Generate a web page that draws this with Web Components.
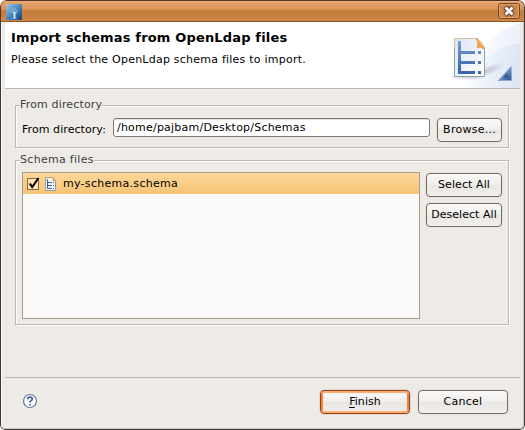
<!DOCTYPE html>
<html lang="en"><head><meta charset="utf-8"><title>Import schemas</title>
<style>
html,body{margin:0;width:525px;height:430px;overflow:hidden;background:#fff}
body{font:11px/14px "DejaVu Sans",sans-serif;color:#000}
</style></head><body>
<wizard-dialog>
  <window-titlebar slot="title"></window-titlebar>
  <wizard-header slot="header"><span slot="title">Import schemas from OpenLdap files</span><span slot="text">Please select the OpenLdap schema files to import.</span></wizard-header>
  <group-box label="From directory" style="--h:43px;--ls:.16px">
    <directory-field value="/home/pajbam/Desktop/Schemas"></directory-field>
  </group-box>
  <group-box label="Schema files" style="--h:165px;--ls:.3px">
    <schema-picker><schema-row>my-schema.schema</schema-row></schema-picker>
  </group-box>
  <wizard-footer slot="footer"></wizard-footer>
</wizard-dialog>
<script>
function define(name, markup, setup) {
  customElements.define(name, class extends HTMLElement {
    constructor() {
      super();
      this.attachShadow({mode: 'open'}).innerHTML = markup;
    }
    connectedCallback() { if (setup) setup(this, this.shadowRoot); }
  });
}

define('push-button', `<style>
:host{display:flex;box-sizing:border-box;width:var(--w,76px);height:24px;border:1px solid #756d62;border-radius:4px;
background:linear-gradient(#faf9f8,#f0eeeb 50%,#e9e6e2 52%,#f1efec);box-shadow:0 0 0 1px #e6e2dc;
align-items:center;justify-content:center;white-space:nowrap;letter-spacing:var(--bls,.25px)}
:host([primary]){border-color:#963f13;box-shadow:0 0 0 1px #e3dad2,inset 0 2px #ffae74,inset 0 -2px #ffad72,inset 2px 0 #f5823c,inset -2px 0 #f5823c}
span{line-height:14px;padding-bottom:1px}
</style><span><slot></slot></span>`);

define('window-titlebar', `<style>
:host{display:flex;box-sizing:border-box;height:22px;padding:0 4px 0 5px;border:1px solid #4d3527;border-bottom:1px solid #89542a;border-radius:6px 6px 0 0;
justify-content:space-between;background:linear-gradient(#edb98a 0,#e4a369 1px,#db955a 8px,#c67c38 10px,#c98140 15px,#d08848 20px)}
.app{margin-top:3px}
.close{margin-top:2px}
svg{display:block}
</style>
<svg class="app" width="16" height="16"><defs><linearGradient id="a" x1="0" y1="0" x2="1" y2="1"><stop stop-color="#a6c9e6"/><stop offset=".5" stop-color="#4c86bd"/><stop offset="1" stop-color="#123d77"/></linearGradient></defs><rect width="16" height="16" rx="1" fill="url(#a)"/><path d="M5 4h5l2 3-2 3H6L4 7z" fill="#77aad5" opacity=".65"/><path d="M8.500 8v7" stroke="#d9efff" stroke-width="1.800"/><path d="M6.500 7.500l2 2 2-2" fill="none" stroke="#b6d8f2"/><path d="M5 14.500h6" stroke="#8dbce2" opacity=".6"/></svg>
<svg class="close" width="22" height="16"><rect x=".5" y=".5" width="21" height="15" rx="2" fill="#cc8749" stroke="#6f4727"/><rect x="1.500" y="1.500" width="19" height="13" rx="1" fill="none" stroke="#e1a36c"/><path d="M7 4l8 8m0-8l-8 8" stroke="#60432d" stroke-width="4.800"/><path d="M7.500 4.500l7 7m0-7l-7 7" stroke="#fff" stroke-width="2.700"/></svg>`);

define('wizard-header', `<style>
:host{display:flex;box-sizing:border-box;height:67px;background:#fff;border-bottom:1px solid #bcb8b3;justify-content:space-between}
.copy{padding:8px 0 0 6px;white-space:nowrap}
.title{font-size:13px;font-weight:bold;line-height:16px;letter-spacing:.165px}
.text{margin-top:7px;line-height:14px;letter-spacing:.23px}
svg{display:block}
</style>
<div class="copy"><div class="title"><slot name="title"></slot></div><div class="text"><slot name="text"></slot></div></div>
<svg width="75" height="66" viewBox="445 22 75 66">
<defs><linearGradient id="s" x1="0" x2="1" y2=".1"><stop stop-color="#fff"/><stop offset=".35" stop-color="#fafbfe"/><stop offset="1" stop-color="#ebf0fa"/></linearGradient>
<linearGradient id="t" x1="0" x2="1" y2=".1"><stop stop-color="#fff"/><stop offset=".35" stop-color="#f2f5fc"/><stop offset="1" stop-color="#dde5f6"/></linearGradient>
<linearGradient id="p" x2="1" y2="1"><stop stop-color="#dde6f3"/><stop offset="1" stop-color="#fff"/></linearGradient>
<linearGradient id="b" gradientUnits="userSpaceOnUse" x1="0" x2="0" y1="41" y2="74"><stop stop-color="#7d9bcb"/><stop offset="1" stop-color="#3560b3"/></linearGradient>
<linearGradient id="c" x2="1" y2="1"><stop stop-color="#e8f1fb"/><stop offset=".5" stop-color="#7395c3"/><stop offset="1" stop-color="#234e8e"/></linearGradient>
<radialGradient id="h"><stop stop-color="#aaa6bc" stop-opacity=".6"/><stop offset="1" stop-color="#aaa6bc" stop-opacity="0"/></radialGradient></defs>
<path d="M464 88C472 65 486 32 520 23V88z" fill="url(#s)"/><path d="M464 88C474 68 490 46 520 44V88z" fill="url(#t)"/>
<ellipse cx="487" cy="71" rx="20" ry="5" transform="rotate(-22 487 71)" fill="url(#h)"/><ellipse cx="467" cy="77" rx="19" ry="3" fill="url(#h)"/>
<path d="M454.500 38.500H477L484.500 48V76.500H454.500z" fill="url(#p)" stroke="#89a5a2"/><path d="M454.500 48V38.500H477" fill="none" stroke="#d3c19d"/>
<path d="M458 41h3v10h14v3H461v7h14v3H461v7h14v3H458zM478 51h3v3h-3zM478 61h3v3h-3zM478 71h3v3h-3z" fill="url(#b)"/>
<path d="M476 38q8 5 8 11-4-3-7-1 2-5-1-10" fill="#f2a34d" stroke="#d98c3c" stroke-width=".6"/><path d="M478 40q4 3 5 6" fill="none" stroke="#ffd295"/>
<path d="M498 80.500L511.500 66V80.500z" fill="url(#c)"/><path d="M503 78l4-5 2 5z" fill="#375c97"/><path d="M498 80.500h13.500" stroke="#8da5cb"/>
</svg>`);

define('group-box', `<style>
:host{display:block;box-sizing:border-box;height:var(--h)}
fieldset{box-sizing:border-box;height:100%;margin:0;padding:0;min-width:0;border:0;display:flow-root;position:relative}
.edge{position:absolute;inset:0;border:1px solid #bbb7b1;box-shadow:1px 1px #fff,inset 1px 1px #fff}
.label{position:absolute;left:5px;top:-7px;background:#eeebe7;color:#404040;white-space:nowrap;line-height:14px;letter-spacing:var(--ls)}
.body{position:relative}
</style><fieldset><div class="edge"></div><div class="label"></div><div class="body"><slot></slot></div></fieldset>`,
(el, r) => { r.querySelector('.label').textContent = el.getAttribute('label'); });

define('directory-field', `<style>
:host{display:flex;padding:13px 6px 0 7px}
label{width:91px;padding-top:5px;white-space:nowrap;letter-spacing:.07px}
.field{box-sizing:border-box;width:317px;height:19px;border:1px solid #83786d;border-radius:3px;background:#fff;box-shadow:inset 0 1px #e5e1dc;padding:2px 3px;line-height:14px;margin-right:7px;white-space:nowrap;letter-spacing:.22px}
</style><label>From directory:</label><div class="field"></div><push-button style="--w:65px">Browse...</push-button>`,
(el, r) => { r.querySelector('.field').textContent = el.getAttribute('value'); });

define('schema-row', `<style>
:host{display:flex;height:21px;align-items:center;background:linear-gradient(#ffd799,#f5c375);white-space:nowrap;letter-spacing:.29px}
svg{display:block;flex:none}.check{margin-left:4px}.doc{margin:0 6px 0 5px}
</style>
<svg class="check" width="13" height="14"><rect x=".5" y="1.500" width="11" height="11" fill="#ffe1b3" stroke="#806b52"/><path d="M2.800 6.500L5.200 10 11.500 1" fill="none" stroke="#000" stroke-width="2"/></svg>
<svg class="doc" width="12" height="14"><path d="M.5.500H8L10.500 4V13.500H.500z" fill="#f4f8fc" stroke="#8d9aa0"/><path d="M.5 13V.500H8" fill="none" stroke="#b5a26a"/><path d="M7.500.500V4H10.500z" fill="#dfa643"/><path d="M2.500 2v9.500H7M2.500 5.500H7M2.500 8.500H7M8 5.500h1M8 8.500h1M8 11.500h1" fill="none" stroke="#4169b2" stroke-width="1.200"/></svg>
<span><slot></slot></span>`);

define('schema-picker', `<style>
:host{display:flex;padding:12px 6px 0 7px;gap:6px}
.list{box-sizing:border-box;width:398px;height:147px;border:1px solid #a79b8c;background:#faf9f8}
.actions{display:flex;flex-direction:column;gap:6px;padding-top:1px}
</style><div class="list"><slot></slot></div><div class="actions"><push-button style="--bls:.1px">Select All</push-button><push-button style="--bls:.04px">Deselect All</push-button></div>`);

define('wizard-footer', `<style>
:host{display:flex;box-sizing:border-box;height:48px;border-top:1px solid #bcb8b3;padding:12px 12px 0 17px;gap:8px}
svg{display:block;margin:3px auto 0 0}u{text-underline-offset:2px;text-decoration-thickness:1px}
</style><svg width="16" height="16" viewBox="0 0 16 16"><circle cx="8" cy="8" r="6.500" fill="#f8fbff" stroke="#637b9d" stroke-width="1.200"/><path d="M5.700 6.200Q5.800 4.200 8 4.200T10.300 6Q10.300 7 9 7.900T8 9.600M8 11v1.600" fill="none" stroke="#455f8c" stroke-width="1.700"/></svg>
<push-button primary style="--w:90px;--bls:.05px"><u>F</u>inish</push-button><push-button style="--w:90px">Cancel</push-button>`);

define('wizard-dialog', `<style>
:host{display:block;box-sizing:border-box;width:525px;height:430px;background:#eeebe7;border-radius:7px 7px 5px 5px;overflow:hidden}
.frame{box-sizing:border-box;height:408px;border:1px solid #3e3735;border-top:0;border-radius:0 0 5px 5px;box-shadow:inset -1px -1px #cfc3bb,inset 1px 0 #f8f5f2;padding:0 4px}
.groups{display:flex;flex-direction:column;gap:12px;padding:16px 11px 0 10px;height:288px;box-sizing:border-box}
</style><slot name="title"></slot><div class="frame"><slot name="header"></slot><div class="groups"><slot></slot></div><slot name="footer"></slot></div>`);
</script></body></html>
